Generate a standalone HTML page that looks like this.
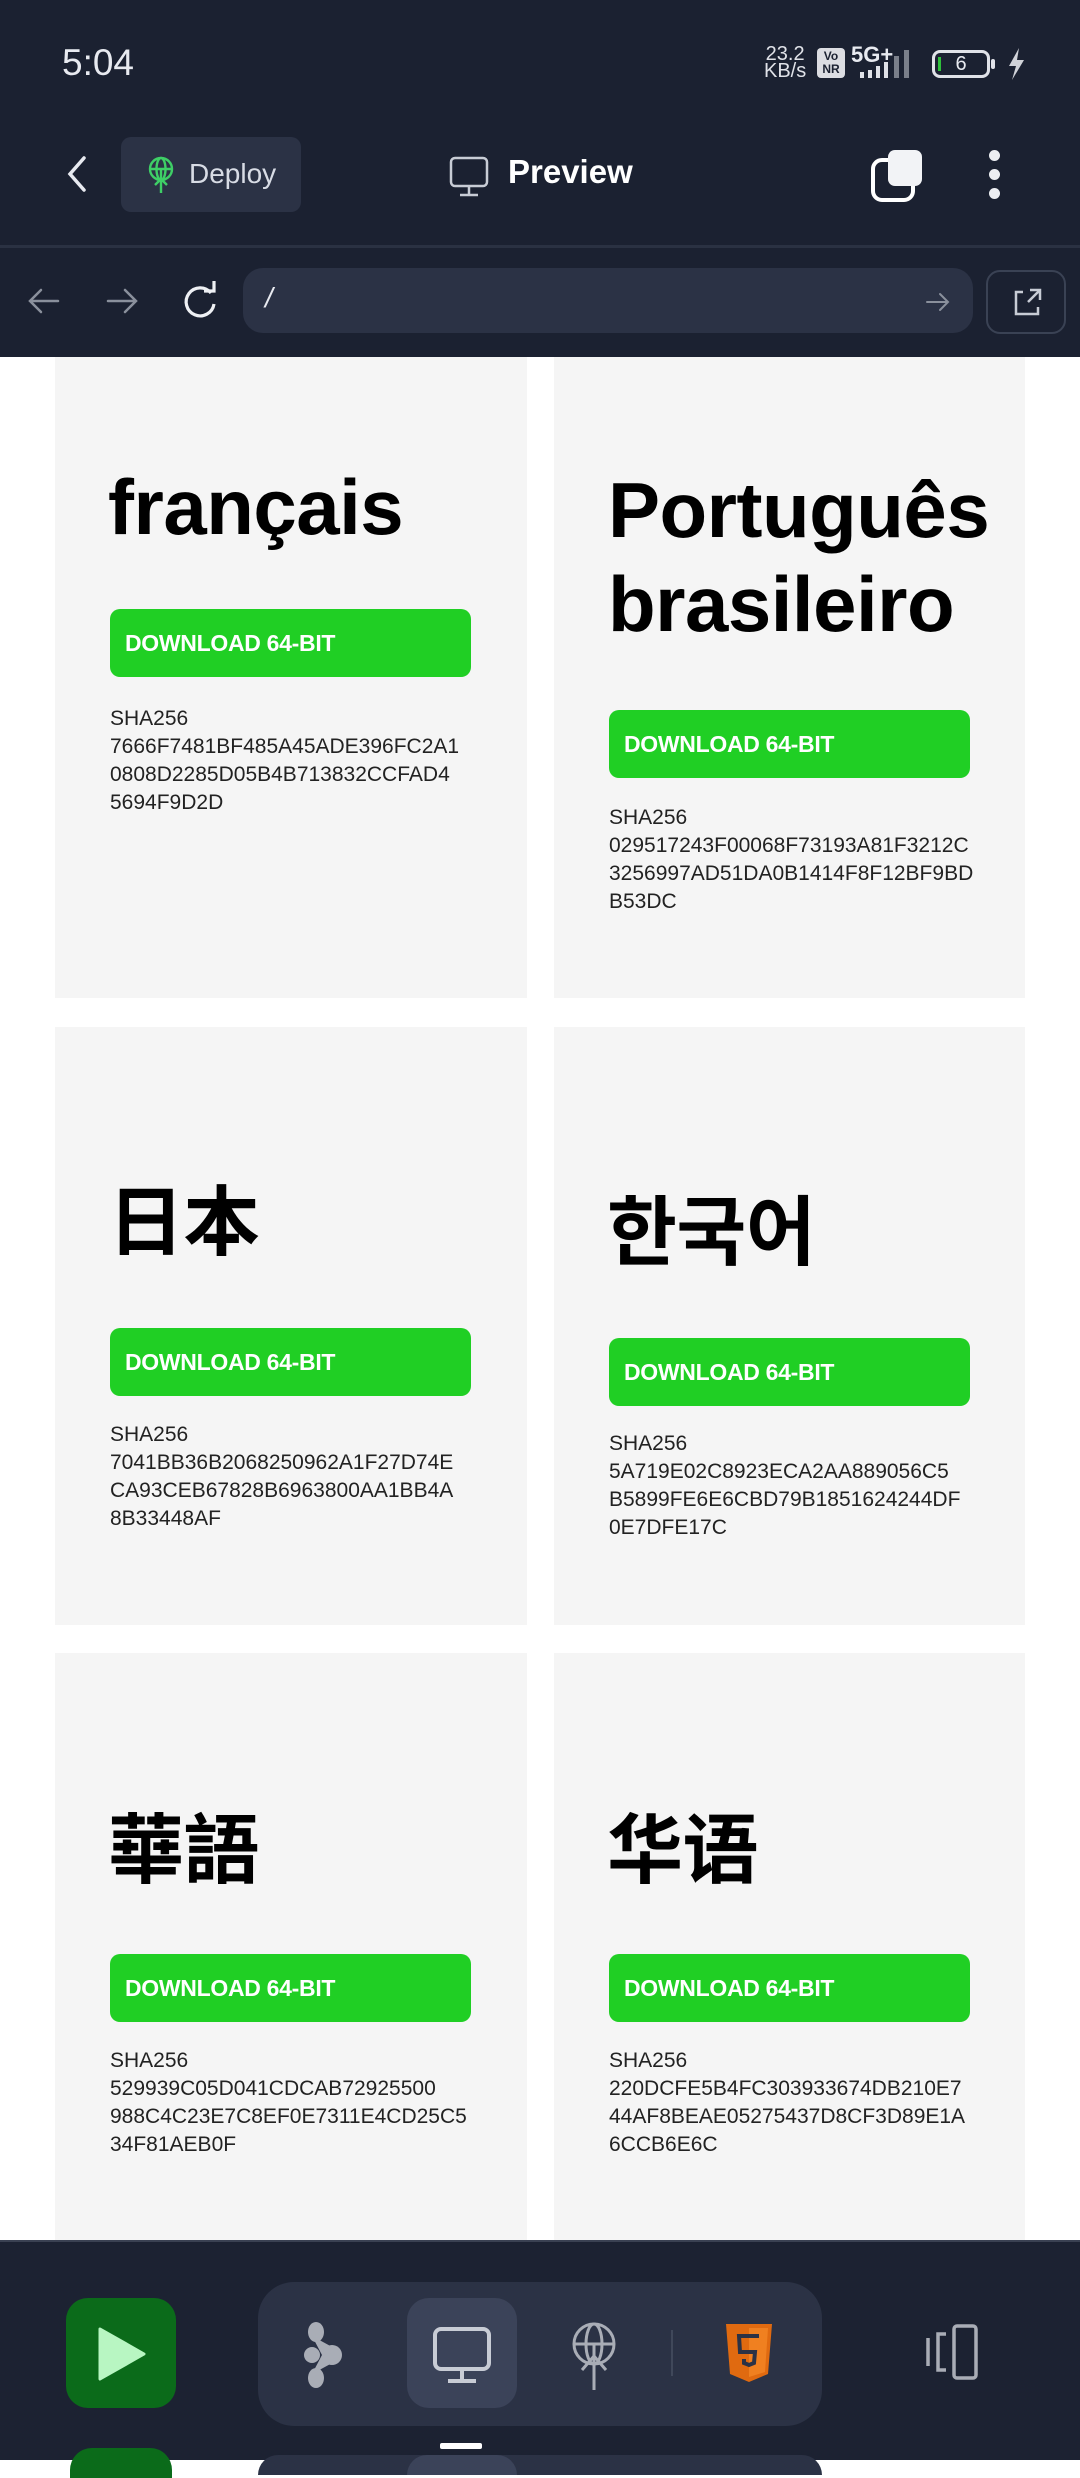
<!DOCTYPE html>
<html><head><meta charset="utf-8"><style>
*{margin:0;padding:0;box-sizing:border-box}
body{width:1080px;height:2460px;position:relative;overflow:hidden;background:#fff;font-family:"Liberation Sans","Noto Sans CJK SC",sans-serif}
.a{position:absolute}
.top{left:0;top:0;width:1080px;height:357px;background:#1b2131}
.card{position:absolute;background:#f5f5f5}
.t{position:absolute;font-weight:bold;color:#000;font-size:78px;line-height:94px;white-space:nowrap;letter-spacing:-0.5px}
.cj{font-family:"Noto Sans CJK JP","Liberation Sans",sans-serif;font-size:76px;line-height:76px;font-weight:bold}
.btn{position:absolute;width:361px;height:68px;background:#20cf24;border-radius:10px;color:#fff;font-weight:bold;font-size:23px;line-height:68px;padding-left:15px;letter-spacing:-0.3px}
.sha{position:absolute;font-size:21px;line-height:28px;color:#222;white-space:nowrap}
.nav{left:0;top:2240px;width:1080px;height:220px;background:#1c2232}
</style></head><body>
<div class="a top"></div>
<div class="a" style="left:62px;top:40px;color:#e8eaf0;font-size:37px;line-height:46px">5:04</div>
<div class="a" style="left:764px;top:46px;color:#e0e2e8;font-size:20px;line-height:17px;text-align:center">23.2<br>KB/s</div>
<div class="a" style="left:817px;top:48px;width:28px;height:30px;background:#dcdde2;border-radius:4px;color:#1b2131;font-size:12px;font-weight:bold;line-height:13px;text-align:center;padding-top:2px">Vo<br>NR</div>
<div class="a" style="left:851px;top:42px;color:#e8eaf0;font-size:22px;font-weight:bold">5G+</div>
<svg class="a" style="left:852px;top:50px" width="70" height="30"><g fill="#e0e2e8"><rect x="8" y="22" width="4" height="6"/><rect x="16" y="20" width="4" height="8"/><rect x="24" y="16" width="4" height="12"/><rect x="32" y="12" width="4" height="16"/></g><g fill="#7a7f8a"><rect x="42" y="6" width="5" height="22"/><rect x="52" y="0" width="5" height="28"/></g></svg>
<div class="a" style="left:932px;top:50px;width:58px;height:28px;border:3px solid #e0e2e8;border-radius:8px;color:#e8eaf0;font-size:20px;line-height:22px;text-align:center">6</div>
<div class="a" style="left:938px;top:57px;width:3px;height:14px;background:#2fbf3b"></div>
<div class="a" style="left:991px;top:59px;width:4px;height:10px;background:#e0e2e8;border-radius:2px"></div>
<svg class="a" style="left:1006px;top:48px" width="20" height="32"><path d="M13 0 L3 18 H10 L6 32 L18 12 H11 Z" fill="#d0d2d8"/></svg>

<svg class="a" style="left:62px;top:154px" width="30" height="40"><path d="M22 4 L8 20 L22 36" fill="none" stroke="#e8eaf0" stroke-width="3.5" stroke-linecap="round"/></svg>
<div class="a" style="left:121px;top:137px;width:180px;height:75px;background:#2b3245;border-radius:10px"></div>
<svg class="a" style="left:146px;top:155px" width="30" height="40"><g fill="none" stroke="#3ecf66" stroke-width="2.4"><circle cx="15" cy="14" r="11"/><ellipse cx="15" cy="14" rx="4.5" ry="11"/><path d="M4 14 H26 M15 14 V38 M9 30 L15 24 L21 30"/></g></svg>
<div class="a" style="left:189px;top:156px;color:#d8dce5;font-size:28px;line-height:36px">Deploy</div>
<svg class="a" style="left:448px;top:154px" width="42" height="44"><g fill="none" stroke="#c8ccd5" stroke-width="2.5"><rect x="3" y="4" width="36" height="28" rx="4"/><path d="M21 32 V40 M12 41 H30"/></g></svg>
<div class="a" style="left:508px;top:152px;color:#fff;font-size:33px;line-height:40px;font-weight:bold">Preview</div>
<svg class="a" style="left:868px;top:146px" width="62" height="60"><rect x="5" y="14" width="40" height="40" rx="9" fill="#1b2131" stroke="#fff" stroke-width="4"/><rect x="20" y="4" width="34" height="36" rx="7" fill="#f2f3f6"/></svg>
<div class="a" style="left:989px;top:150px;width:11px;height:11px;border-radius:6px;background:#eceef2"></div>
<div class="a" style="left:989px;top:169px;width:11px;height:11px;border-radius:6px;background:#eceef2"></div>
<div class="a" style="left:989px;top:188px;width:11px;height:11px;border-radius:6px;background:#eceef2"></div>

<div class="a" style="left:0;top:245px;width:1080px;height:3px;background:#2a3142"></div>
<svg class="a" style="left:26px;top:286px" width="36" height="30"><path d="M32 15 H5 M15 4 L4 15 L15 26" fill="none" stroke="#8a909c" stroke-width="2.5" stroke-linecap="round"/></svg>
<svg class="a" style="left:104px;top:286px" width="36" height="30"><path d="M4 15 H31 M21 4 L32 15 L21 26" fill="none" stroke="#8a909c" stroke-width="2.5" stroke-linecap="round"/></svg>
<svg class="a" style="left:178px;top:280px" width="44" height="42"><path d="M33 13 A14 14 0 1 0 36 24" fill="none" stroke="#eef0f4" stroke-width="3.2"/><path d="M26 11 H36 V1" fill="none" stroke="#eef0f4" stroke-width="3.2"/></svg>
<div class="a" style="left:243px;top:268px;width:730px;height:65px;background:#2b3245;border-radius:20px"></div>
<div class="a" style="left:265px;top:282px;color:#e8eaf0;font-size:28px;font-style:italic">/</div>
<svg class="a" style="left:924px;top:290px" width="28" height="24"><path d="M3 12 H24 M16 4 L24 12 L16 20" fill="none" stroke="#8a909c" stroke-width="2" stroke-linecap="round"/></svg>
<div class="a" style="left:986px;top:270px;width:80px;height:64px;border:2px solid #3a4254;border-radius:14px"></div>
<svg class="a" style="left:1010px;top:286px" width="34" height="34"><path d="M13 6 H6 V28 H28 V21 M18 16 L29 5 M20 4 H30 V14" fill="none" stroke="#c8ccd5" stroke-width="2.5"/></svg>

<div class="card" style="left:55px;top:357px;width:472px;height:641px"></div>
<div class="card" style="left:554px;top:357px;width:471px;height:641px"></div>
<div class="card" style="left:55px;top:1027px;width:472px;height:598px"></div>
<div class="card" style="left:554px;top:1027px;width:471px;height:598px"></div>
<div class="card" style="left:55px;top:1653px;width:472px;height:600px"></div>
<div class="card" style="left:554px;top:1653px;width:471px;height:600px"></div>

<div class="t" style="left:108px;top:460px">français</div>
<div class="btn" style="left:110px;top:609px">DOWNLOAD 64-BIT</div>
<div class="sha" style="left:110px;top:705px">SHA256<br>7666F7481BF485A45ADE396FC2A1<br>0808D2285D05B4B713832CCFAD4<br>5694F9D2D</div>

<div class="t" style="left:608px;top:463px">Português<br>brasileiro</div>
<div class="btn" style="left:609px;top:710px">DOWNLOAD 64-BIT</div>
<div class="sha" style="left:609px;top:804px">SHA256<br>029517243F00068F73193A81F3212C<br>3256997AD51DA0B1414F8F12BF9BD<br>B53DC</div>

<div class="t cj" style="left:108px;top:1178px">日本</div>
<div class="btn" style="left:110px;top:1328px">DOWNLOAD 64-BIT</div>
<div class="sha" style="left:110px;top:1421px">SHA256<br>7041BB36B2068250962A1F27D74E<br>CA93CEB67828B6963800AA1BB4A<br>8B33448AF</div>

<div class="t cj" style="left:607px;top:1188px;font-family:'Noto Sans CJK KR',sans-serif">한국어</div>
<div class="btn" style="left:609px;top:1338px">DOWNLOAD 64-BIT</div>
<div class="sha" style="left:609px;top:1430px">SHA256<br>5A719E02C8923ECA2AA889056C5<br>B5899FE6E6CBD79B1851624244DF<br>0E7DFE17C</div>

<div class="t cj" style="left:108px;top:1806px;font-family:'Noto Sans CJK TC',sans-serif">華語</div>
<div class="btn" style="left:110px;top:1954px">DOWNLOAD 64-BIT</div>
<div class="sha" style="left:110px;top:2047px">SHA256<br>529939C05D041CDCAB72925500<br>988C4C23E7C8EF0E7311E4CD25C5<br>34F81AEB0F</div>

<div class="t cj" style="left:607px;top:1806px;font-family:'Noto Sans CJK SC',sans-serif">华语</div>
<div class="btn" style="left:609px;top:1954px">DOWNLOAD 64-BIT</div>
<div class="sha" style="left:609px;top:2047px">SHA256<br>220DCFE5B4FC303933674DB210E7<br>44AF8BEAE05275437D8CF3D89E1A<br>6CCB6E6C</div>

<div class="a nav"></div>
<div class="a" style="left:0;top:2240px;width:1080px;height:2px;background:#3a4152"></div>
<div class="a" style="left:66px;top:2298px;width:110px;height:110px;background:#0b6b1a;border-radius:22px"></div>
<svg class="a" style="left:96px;top:2326px" width="56" height="56"><path d="M4 3 L48 28 L4 53 Z" fill="#b8f6c2" stroke="#b8f6c2" stroke-width="3" stroke-linejoin="round"/></svg>
<div class="a" style="left:258px;top:2282px;width:564px;height:144px;background:#2b3245;border-radius:36px"></div>
<div class="a" style="left:407px;top:2298px;width:110px;height:110px;background:#3b4359;border-radius:22px"></div>
<svg class="a" style="left:298px;top:2320px" width="56" height="70"><g fill="#a9adb6"><ellipse cx="18" cy="12" rx="8" ry="10"/><ellipse cx="18" cy="58" rx="8" ry="10"/><circle cx="14" cy="35" r="8"/><circle cx="34" cy="35" r="10"/><path d="M14 16 L36 28 L36 42 L14 54 L24 35 Z"/></g></svg>
<svg class="a" style="left:430px;top:2325px" width="64" height="60"><g fill="none" stroke="#c8ccd5" stroke-width="4"><rect x="5" y="4" width="54" height="40" rx="6"/><path d="M32 44 V54 M18 56 H46"/></g></svg>
<svg class="a" style="left:566px;top:2320px" width="56" height="72"><g fill="none" stroke="#a9adb6" stroke-width="3"><circle cx="28" cy="24" r="20"/><ellipse cx="28" cy="24" rx="8" ry="20"/><path d="M8 24 H48 M28 24 V70 M16 50 L28 36 L40 50"/></g></svg>
<div class="a" style="left:671px;top:2330px;width:2px;height:46px;background:#40485a"></div>
<svg class="a" style="left:724px;top:2322px" width="50" height="62"><path d="M2 2 H48 L44 52 L25 60 L6 52 Z" fill="#e06a10"/><path d="M25 6 H44 L41 50 L25 55 Z" fill="#f08020"/><path d="M35 14 H15 L16 30 H31 L30 41 L25 43 L20 41 V37" fill="none" stroke="#2b3245" stroke-width="4"/></svg>
<svg class="a" style="left:924px;top:2324px" width="70" height="58"><g fill="none" stroke="#a9adb6" stroke-width="3.5"><path d="M4 14 V42"/><path d="M22 10 H14 V46 H22"/><rect x="30" y="2" width="22" height="52" rx="3"/></g></svg>
<div class="a" style="left:70px;top:2448px;width:102px;height:30px;background:#0b6b1a;border-radius:22px 22px 0 0"></div>
<div class="a" style="left:258px;top:2455px;width:564px;height:20px;background:#2b3245;border-radius:24px 24px 0 0"></div>
<div class="a" style="left:407px;top:2455px;width:110px;height:20px;background:#3b4359;border-radius:20px 20px 0 0"></div>
<div class="a" style="left:440px;top:2443px;width:42px;height:6px;background:#fff;border-radius:2px"></div>
</body></html>
